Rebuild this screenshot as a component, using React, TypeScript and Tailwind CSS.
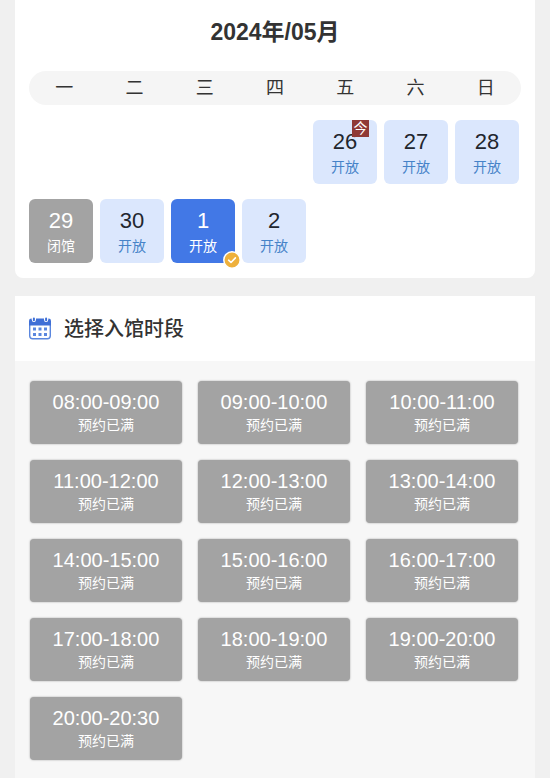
import clsx from "clsx";

type DayStatus = "open" | "closed" | "selected";

interface Day {
  date: number;
  status: DayStatus;
  today?: boolean;
}

const weekdays = ["一", "二", "三", "四", "五", "六", "日"];

const days: Day[] = [
  { date: 26, status: "open", today: true },
  { date: 27, status: "open" },
  { date: 28, status: "open" },
  { date: 29, status: "closed" },
  { date: 30, status: "open" },
  { date: 1, status: "selected" },
  { date: 2, status: "open" },
];

const slots = [
  "08:00-09:00",
  "09:00-10:00",
  "10:00-11:00",
  "11:00-12:00",
  "12:00-13:00",
  "13:00-14:00",
  "14:00-15:00",
  "15:00-16:00",
  "16:00-17:00",
  "17:00-18:00",
  "18:00-19:00",
  "19:00-20:00",
  "20:00-20:30",
];

function CalendarIcon() {
  return (
    <svg className="size-6" viewBox="0 0 24 24" fill="none" aria-hidden="true">
      <rect x="1.7" y="3.2" width="20.6" height="18.6" rx="3" fill="#fff" stroke="#5b87de" strokeWidth="1.4" />
      <path
        d="M1 8.4V4Q1 1.6 3.4 1.6h.4v1.2a2.1 2.1 0 0 0 4.2 0V1.6h8v1.2a2.1 2.1 0 0 0 4.2 0V1.6h.4Q23 1.6 23 4v4.4z"
        fill="#3f6fd6"
      />
      <path d="M3.8 0h4.2v2.8a2.1 2.1 0 0 1-4.2 0zM16 0h4.2v2.8a2.1 2.1 0 0 1-4.2 0z" fill="#fff" />
      <path d="M5.9 1.4v1.8M18.1 1.4v1.8" stroke="#3f6fd6" strokeWidth="2" strokeLinecap="round" />
      <path
        d="M5 10.5h3v3H5zM10.5 10.5h3v3h-3zM16 10.5h3v3h-3zM5 16h3v3H5zM10.5 16h3v3h-3zM16 16h3v3h-3z"
        fill="#5b87de"
      />
    </svg>
  );
}

function SelectedMark() {
  return (
    <svg className="absolute -right-1.5 -bottom-1.5 size-4.5" viewBox="0 0 18 18" fill="none" aria-hidden="true">
      <circle cx="9" cy="9" r="8.2" fill="#eeb03c" stroke="#fff" strokeWidth="1.5" />
      <path d="M5.6 9.2l2.4 2.3 4.4-4.6" stroke="#fff" strokeWidth="1.6" strokeLinecap="round" strokeLinejoin="round" />
    </svg>
  );
}

function DayCell({ day, first }: { day: Day; first: boolean }) {
  return (
    <button
      type="button"
      disabled={day.status === "closed"}
      aria-pressed={day.status === "selected"}
      className={clsx(
        "relative flex h-16 flex-col items-center rounded-md pt-2",
        first && "col-start-5",
        day.status === "open" && "bg-[#dbe7fd] text-[#22262e]",
        day.status === "closed" && "bg-[#a3a3a3] text-white",
        day.status === "selected" && "bg-[#4278e6] text-white",
      )}
    >
      <span className="text-[22px] leading-7">{day.date}</span>
      <span className={clsx("text-sm leading-[22px]", day.status === "open" && "text-[#4683c8]")}>
        {day.status === "closed" ? "闭馆" : "开放"}
      </span>
      {day.today && (
        <span className="absolute top-0 right-2 size-[17px] bg-[#8f3937] text-center text-sm leading-4 text-white">
          今
        </span>
      )}
      {day.status === "selected" && <SelectedMark />}
    </button>
  );
}

function SlotCard({ time }: { time: string }) {
  return (
    <button
      type="button"
      disabled
      className="flex h-[63px] flex-col items-center rounded bg-[#a3a3a3] pt-2 text-white shadow-[0_0_2px_rgba(0,0,0,0.35)]"
    >
      <span className="text-xl leading-[26px]">{time}</span>
      <span className="text-sm leading-5">预约已满</span>
    </button>
  );
}

export default function App() {
  return (
    <main className="min-h-screen bg-[#f0f0f0] px-[15px] font-['Liberation_Sans','Noto_Sans_CJK_SC',sans-serif] text-[#333]">
      <section className="rounded-b-lg bg-white px-3.5 pt-4 pb-[15px]">
        <h1 className="text-center text-[23px] leading-8 font-bold">2024年/05月</h1>
        <div className="mt-[23px] grid grid-cols-7 rounded-full bg-[#f5f5f5] text-center text-lg leading-[34px]">
          {weekdays.map((name) => (
            <span key={name}>{name}</span>
          ))}
        </div>
        <div className="mt-[15px] mr-0.5 grid grid-cols-7 gap-x-[7px] gap-y-[15px]">
          {days.map((day, i) => (
            <DayCell key={day.date} day={day} first={i === 0} />
          ))}
        </div>
      </section>

      <section className="mt-[18px] bg-[#f7f7f7]">
        <header className="flex items-center gap-3 bg-white px-[13px] pt-[17px] pb-4">
          <CalendarIcon />
          <h2 className="text-xl leading-8 font-medium">选择入馆时段</h2>
        </header>
        <div className="grid grid-cols-3 gap-4 pt-5 pr-[17px] pb-5 pl-[15px]">
          {slots.map((time) => (
            <SlotCard key={time} time={time} />
          ))}
        </div>
      </section>
    </main>
  );
}
